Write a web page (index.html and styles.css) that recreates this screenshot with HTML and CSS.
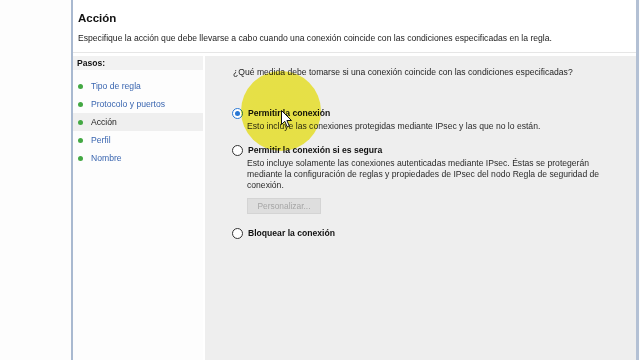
FILE: index.html
```html
<!DOCTYPE html>
<html lang="es">
<head>
  <meta charset="UTF-8">
  <title>Acción</title>
  <link rel="stylesheet" href="styles.css">
</head>
<body>
  <div class="window">
    <div class="header">
      <h1 class="title">Acción</h1>
      <p class="subtitle">Especifique la acción que debe llevarse a cabo cuando una conexión coincide con las condiciones especificadas en la regla.</p>
    </div>

    <div class="body">
      <div class="steps">
        <div class="steps-title">Pasos:</div>
        <div class="step"><span class="dot"></span><span class="link">Tipo de regla</span></div>
        <div class="step"><span class="dot"></span><span class="link">Protocolo y puertos</span></div>
        <div class="step current"><span class="dot"></span><span>Acción</span></div>
        <div class="step"><span class="dot"></span><span class="link">Perfil</span></div>
        <div class="step"><span class="dot"></span><span class="link">Nombre</span></div>
      </div>

      <div class="content">
        <p class="question">¿Qué medida debe tomarse si una conexión coincide con las condiciones especificadas?</p>

        <div class="option first">
          <div class="option-row"><span class="radio checked"></span><span class="option-label">Permitir la conexión</span></div>
          <p class="option-desc">Esto incluye las conexiones protegidas mediante IPsec y las que no lo están.</p>
        </div>

        <div class="option">
          <div class="option-row"><span class="radio"></span><span class="option-label">Permitir la conexión si es segura</span></div>
          <p class="option-desc">Esto incluye solamente las conexiones autenticadas mediante IPsec. Éstas se protegerán<br>mediante la configuración de reglas y propiedades de IPsec del nodo Regla de seguridad de<br>conexión.</p>
          <button class="custom" disabled>Personalizar...</button>
        </div>

        <div class="option last">
          <div class="option-row"><span class="radio"></span><span class="option-label">Bloquear la conexión</span></div>
        </div>
      </div>
    </div>

    <!-- resaltado del cursor -->
    <div class="spot"></div>
    <svg class="cursor" width="12" height="18" viewBox="0 0 12 18">
      <path d="M0.5 0.5 L0.5 14.5 L3.8 11.3 L6.2 16.8 L8.3 15.9 L5.9 10.5 L10.5 10.5 Z" fill="#fff" stroke="#111" stroke-width="1"/>
    </svg>
  </div>
</body>
</html>
```

FILE: styles.css
```css
* {
  box-sizing: border-box;
}

body {
  margin: 0;
  width: 640px;
  height: 360px;
  overflow: hidden;
  background: #fdfdfd;
  font-family: "Liberation Sans", Arial, sans-serif;
  font-size: 8.6px;
  color: #1e1e1e;
}

.window {
  position: relative;
  margin-left: 71px;
  width: 568px;
  height: 360px;
  border-left: 2px solid #a9b9d0;
  border-right: 3px solid #b3c0d4;
  background: #fff;
  display: flex;
  flex-direction: column;
}

.header {
  height: 53px;
  padding: 12px 0 0 5px;
  border-bottom: 1px solid #e6e6e6;
}

.title {
  margin: 0;
  font-size: 11.5px;
  font-weight: bold;
  color: #111;
}

.subtitle {
  margin: 9px 0 0;
  color: #222;
}

.body {
  flex: 1;
  display: flex;
  padding-top: 3px;
}

.steps {
  width: 130px;
  background: #fdfdfd;
}

.steps-title {
  height: 14px;
  padding: 2px 0 0 4px;
  background: #f2f2f2;
  font-weight: bold;
  color: #111;
}

.step {
  display: flex;
  align-items: center;
  height: 18px;
  padding-left: 5px;
  gap: 8px;
}

.step:nth-child(2) {
  margin-top: 7px;
}

.step.current {
  background: #efefef;
  color: #222;
}

.dot {
  width: 5px;
  height: 5px;
  border-radius: 50%;
  background: #43a843;
}

.link {
  color: #3a66b0;
}

.content {
  flex: 1;
  margin-left: 2px;
  background: #eeeeee;
  padding: 11px 0 0 28px;
}

.question {
  margin: 0;
}

.option {
  margin-top: 11px;
}

.option.first {
  margin-top: 29px;
}

.option.last {
  margin-top: 12px;
}

.option-row {
  display: flex;
  align-items: center;
  gap: 5px;
  height: 14px;
  margin-left: -1px;
}

.radio {
  width: 11px;
  height: 11px;
  border-radius: 50%;
  border: 1px solid #333;
  background: #fff;
  position: relative;
}

.radio.checked {
  border-color: #2a78d4;
}

.radio.checked::after {
  content: "";
  position: absolute;
  left: 2px;
  top: 2px;
  width: 5px;
  height: 5px;
  border-radius: 50%;
  background: #2a78d4;
}

.option-label {
  font-weight: bold;
  color: #111;
}

.option-desc {
  margin: 1px 0 0 14px;
  line-height: 11px;
  color: #2a2a2a;
}

.custom {
  margin: 7px 0 0 14px;
  width: 74px;
  height: 16px;
  border: 1px solid #d4d4d4;
  background: #dedede;
  color: #a6a6a6;
  font-family: inherit;
  font-size: 8.4px;
  padding: 0;
}

.spot {
  position: absolute;
  left: 168px;
  top: 71px;
  width: 80px;
  height: 80px;
  border-radius: 50%;
  background: radial-gradient(circle, #f7f04a 0%, #f7f04c 70%, rgba(247, 240, 80, 0.35) 92%, rgba(247, 240, 80, 0) 100%);
  mix-blend-mode: multiply;
  pointer-events: none;
}

.cursor {
  position: absolute;
  left: 208px;
  top: 110px;
}
```
